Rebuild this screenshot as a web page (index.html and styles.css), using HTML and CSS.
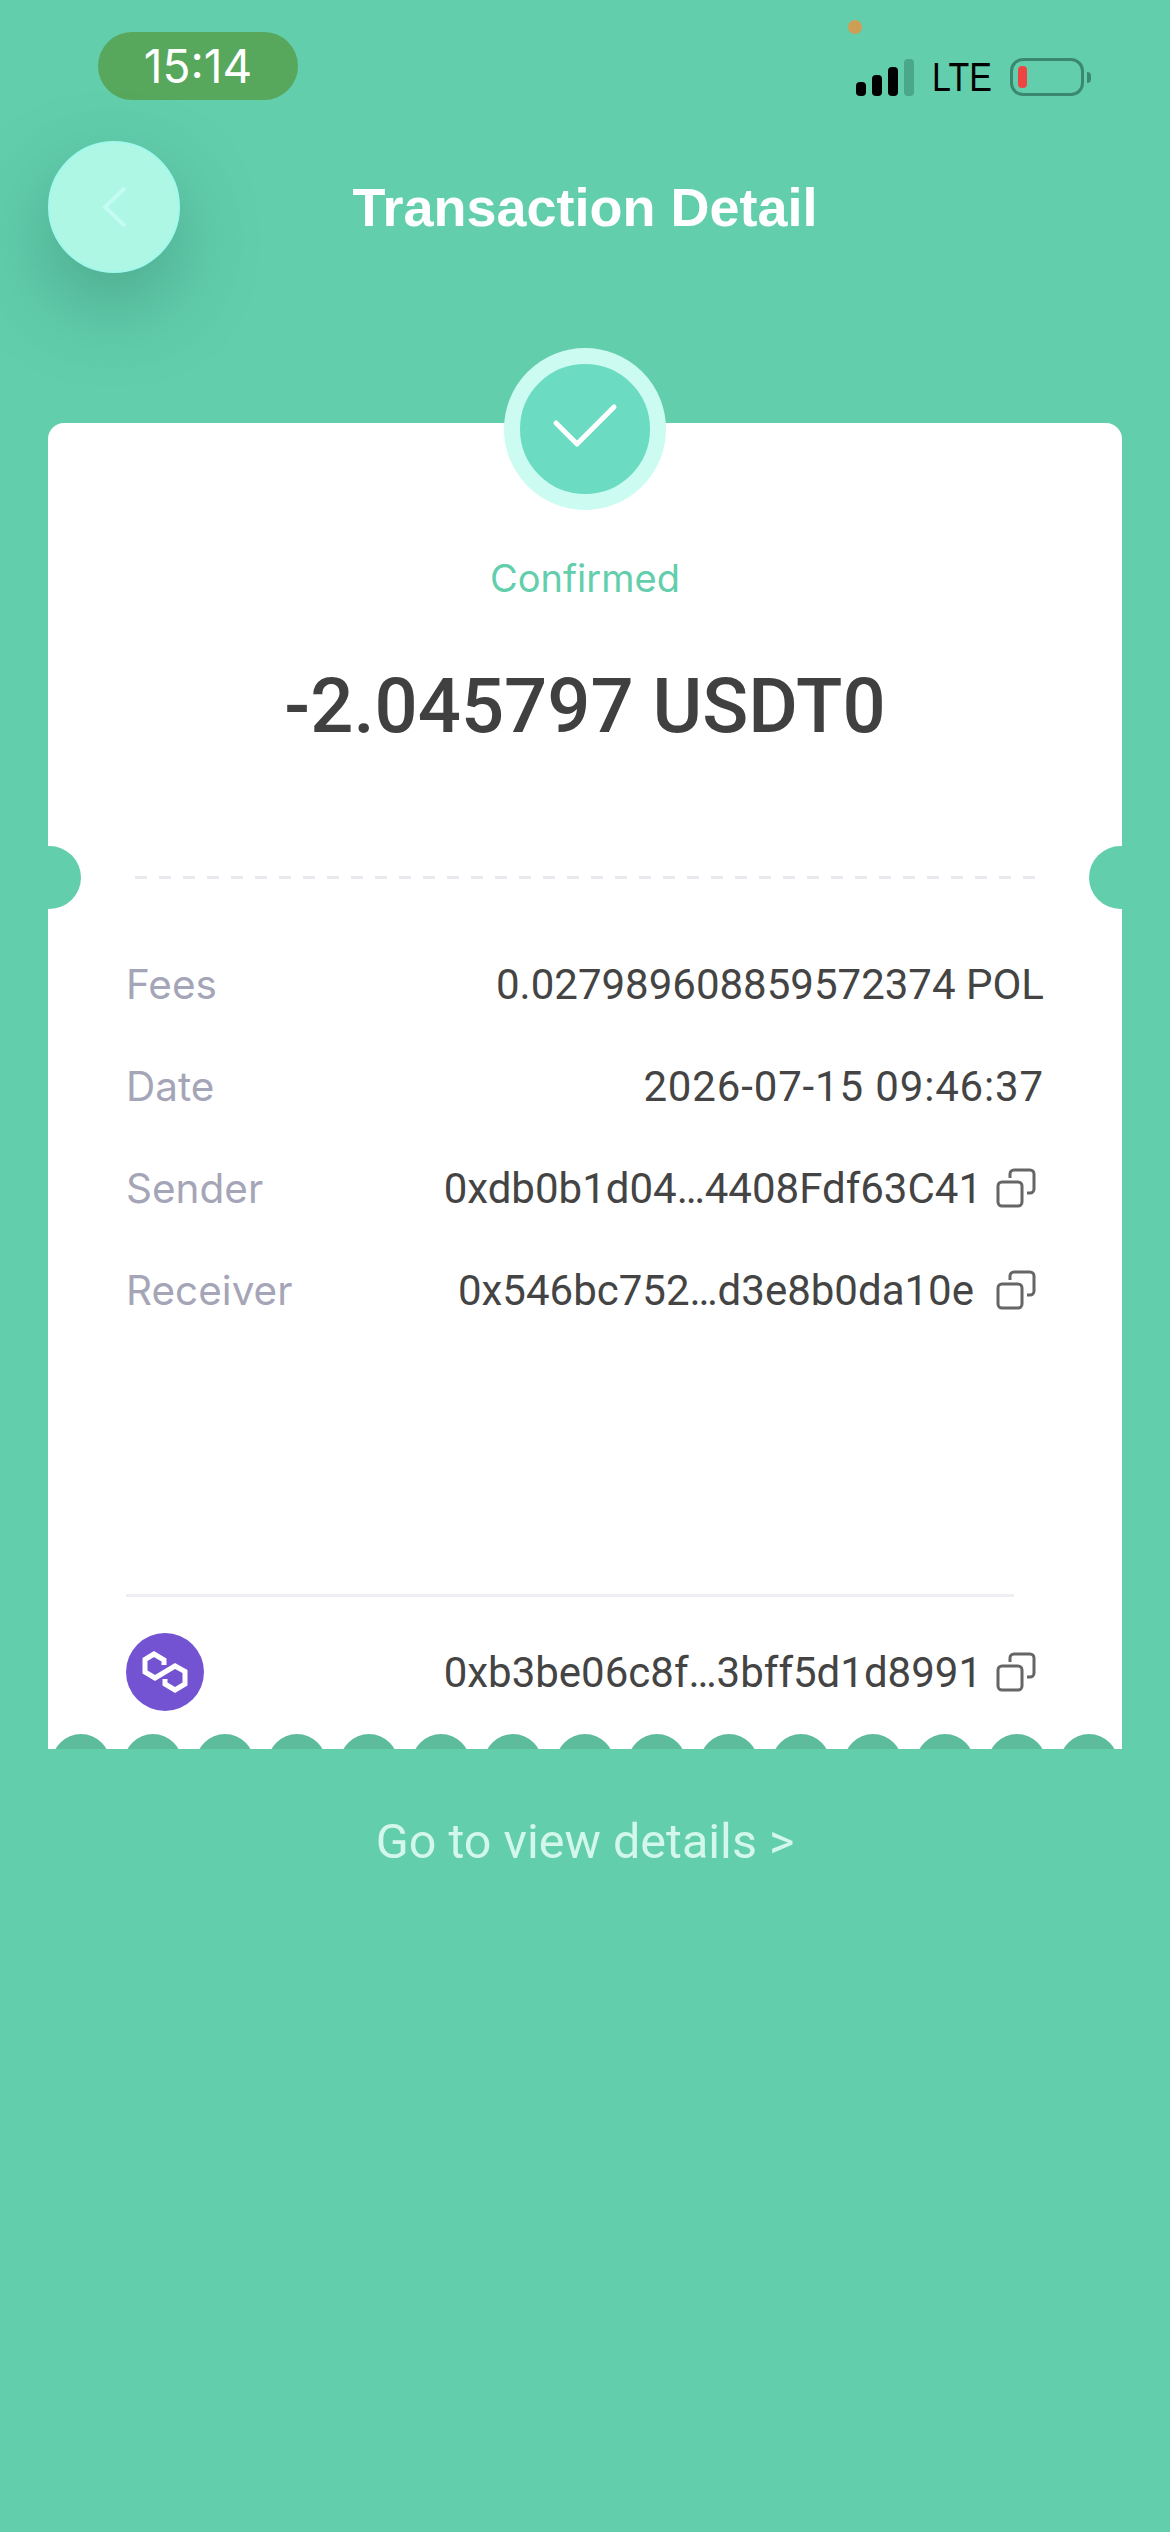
FILE: index.html
```html
<!DOCTYPE html>
<html lang="en">

<head>
  <meta charset="UTF-8">
  <meta name="viewport" content="width=device-width, initial-scale=1.0">
  <title>Transaction Detail</title>
  <link rel="stylesheet" href="styles.css">
</head>

<body>
  <svg class="defs" width="0" height="0">
    <symbol id="copy" viewBox="0 0 40 40">
      <rect x="2" y="14" width="24" height="24" rx="4" fill="none" stroke="#666" stroke-width="3" />
      <path d="M14 10V6a4 4 0 0 1 4-4h16a4 4 0 0 1 4 4v15a4 4 0 0 1-4 4h-3" fill="none" stroke="#666" stroke-width="3" />
    </symbol>
  </svg>

  <div id="page">
    <div class="status">
      <div class="time">15:14</div>
      <span class="cam-dot"></span>
      <div class="status-right">
        <div class="signal"><i class="b1"></i><i class="b2"></i><i class="b3"></i><i class="b4"></i></div>
        <span class="lte">LTE</span>
        <div class="battery"><i></i></div>
        <span class="nub"></span>
      </div>
    </div>

    <div class="header">
      <button type="button" class="back">
        <svg width="40" height="48" viewBox="0 0 40 48">
          <path d="M31 5 11 24l20 19" fill="none" stroke="#c4fbf2" stroke-width="4" />
        </svg>
      </button>
      <h1>Transaction Detail</h1>
    </div>

    <div class="card">
      <div class="badge">
        <svg width="130" height="130" viewBox="0 0 130 130">
          <path d="M36 59 57 80 94 43" fill="none" stroke="#fff" stroke-width="5" stroke-linecap="round" stroke-linejoin="round" />
        </svg>
      </div>
      <span class="notch left"></span>
      <span class="notch right"></span>

      <div class="state">Confirmed</div>
      <div class="amount">-2.045797 USDT0</div>
      <div class="dash"></div>

      <div class="rows">
        <div class="row"><span class="label">Fees</span><span class="value">0.027989608859572374 POL</span></div>
        <div class="row"><span class="label">Date</span><span class="value date">2026-07-15 09:46:37</span></div>
        <div class="row">
          <span class="label">Sender</span>
          <span class="value addr">0xdb0b1d04…4408Fdf63C41<svg class="copy"><use href="#copy" /></svg></span>
        </div>
        <div class="row">
          <span class="label">Receiver</span>
          <span class="value addr wide">0x546bc752…d3e8b0da10e<svg class="copy"><use href="#copy" /></svg></span>
        </div>
      </div>

      <div class="line"></div>

      <div class="foot">
        <div class="chain">
          <svg width="78" height="78" viewBox="0 0 78 78">
            <path d="M38 32V27L28 21 19 26.500V39L29 45 49 33 59 38.500V51L49 57 39 51V46" fill="none" stroke="#fff" stroke-width="5" />
          </svg>
        </div>
        <span class="value addr">0xb3be06c8f…3bff5d1d8991<svg class="copy"><use href="#copy" /></svg></span>
      </div>

      <div class="scallops">
        <i></i><i></i><i></i><i></i><i></i><i></i><i></i><i></i><i></i><i></i><i></i><i></i><i></i><i></i><i></i>
      </div>
    </div>

    <div class="more">Go to view details &gt;</div>
  </div>
</body>

</html>
```

FILE: styles.css
```css
body {
  margin: 0;
  font-family: 'Roboto', sans-serif;
}

.defs {
  position: absolute;
}

#page {
  height: 2532px;
  overflow: hidden;
  background-color: #62ceac;
  position: relative;
}

/* status bar */
.status {
  display: flex;
  justify-content: space-between;
  align-items: flex-start;
  height: 141px;
  padding: 32px 79px 0 98px;
  box-sizing: border-box;
}

.time {
  width: 200px;
  height: 68px;
  border-radius: 34px;
  background-color: #57a85c;
  color: #fff;
  font-family: 'Inter', sans-serif;
  font-size: 46px;
  line-height: 68px;
  text-align: center;
}

.cam-dot {
  position: absolute;
  left: 848px;
  top: 20px;
  width: 14px;
  height: 14px;
  border-radius: 50%;
  background-color: #cf9e55;
}

.status-right {
  display: flex;
  align-items: center;
  margin-top: 26px;
  height: 38px;
}

.signal {
  display: flex;
  align-items: flex-end;
  gap: 6px;
  height: 38px;
}

.signal i {
  display: block;
  width: 10px;
  border-radius: 4px;
  background-color: #000;
}

.signal .b1 { height: 14px; }
.signal .b2 { height: 21px; }
.signal .b3 { height: 29px; }
.signal .b4 { height: 37px; background-color: #4aa78a; }

.lte {
  width: 58px;
  margin: 0 20px 0 18px;
  font-family: 'Liberation Sans', sans-serif;
  font-size: 40px;
  line-height: 38px;
  color: #000;
  transform: scaleX(.85);
  transform-origin: left center;
}

.battery {
  width: 74px;
  height: 38px;
  padding: 5px;
  border: 3px solid #3b8870;
  border-radius: 13px;
  box-sizing: border-box;
}

.battery i {
  display: block;
  width: 9px;
  height: 22px;
  border-radius: 4px;
  background-color: #ef4444;
}

.nub {
  width: 4px;
  height: 11px;
  margin-left: 3px;
  border-radius: 0 6px 6px 0;
  background-color: #3b8870;
}

/* header */
.header {
  display: grid;
  grid-template-columns: 132px 1fr 132px;
  align-items: center;
  padding: 0 48px;
}

.back {
  display: flex;
  align-items: center;
  justify-content: center;
  width: 132px;
  height: 132px;
  padding: 0;
  border: 2px solid #a2f8ec;
  border-radius: 50%;
  background-color: #adf7e4;
  box-shadow: -2px 32px 80px rgba(40, 110, 90, .4);
}

.header h1 {
  margin: 0;
  font-family: 'Liberation Sans', sans-serif;
  font-size: 54px;
  font-weight: bold;
  text-align: center;
  color: #fff;
}

/* card */
.card {
  position: relative;
  height: 1326px;
  margin: 150px 48px 0;
  padding: 129px 78px 0;
  box-sizing: border-box;
  background-color: #fff;
  border-radius: 16px 16px 0 0;
}

.badge {
  position: absolute;
  top: -75px;
  left: 456px;
  width: 130px;
  height: 130px;
  border: 16px solid #ccfbf2;
  border-radius: 50%;
  background-color: #6bdbc2;
}

.badge svg {
  display: block;
}

.notch {
  position: absolute;
  top: 423px;
  width: 63px;
  height: 63px;
  border-radius: 50%;
  background-color: #62ceac;
}

.notch.left { left: -30px; }
.notch.right { right: -30px; }

.state {
  font-family: 'Inter', sans-serif;
  font-size: 38px;
  line-height: 52px;
  text-align: center;
  color: #62ceac;
}

.amount {
  margin-top: 57px;
  font-size: 76px;
  font-weight: 500;
  line-height: 90px;
  text-align: center;
  color: #404040;
}

.dash {
  height: 3px;
  width: 900px;
  margin: 125px 0 0 9px;
  background-image: repeating-linear-gradient(90deg, #e9e9f0 0 12px, transparent 12px 24px);
}

.rows {
  display: flex;
  flex-direction: column;
  margin-top: 54px;
}

.row {
  display: flex;
  justify-content: space-between;
  align-items: center;
  height: 102px;
}

.label {
  font-family: 'Inter', sans-serif;
  font-size: 40.500px;
  color: #a5a5b8;
}

.value {
  font-size: 42px;
  color: #444;
}

.date {
  letter-spacing: .85px;
}

.addr {
  display: flex;
  align-items: center;
  margin-right: 8px;
}

.copy {
  width: 40px;
  height: 40px;
  margin-left: 14px;
}

.addr.wide .copy {
  margin-left: 22px;
}

.line {
  width: 888px;
  height: 3px;
  margin-top: 253px;
  background-color: #eeeef3;
}

.foot {
  display: flex;
  justify-content: space-between;
  align-items: center;
  margin-top: 36px;
}

.chain {
  width: 78px;
  height: 78px;
  border-radius: 50%;
  background-color: #7353d2;
}

.chain svg {
  display: block;
}

.scallops {
  position: absolute;
  left: 4px;
  right: 4px;
  bottom: 0;
  height: 15px;
  display: flex;
  justify-content: space-between;
  overflow: hidden;
}

.scallops i {
  display: block;
  flex: none;
  width: 58px;
  height: 58px;
  border-radius: 50%;
  background-color: #5dbc9c;
}

.more {
  margin-top: 62px;
  font-size: 48.500px;
  line-height: 62px;
  text-align: center;
  color: #d3f7ea;
}
```
